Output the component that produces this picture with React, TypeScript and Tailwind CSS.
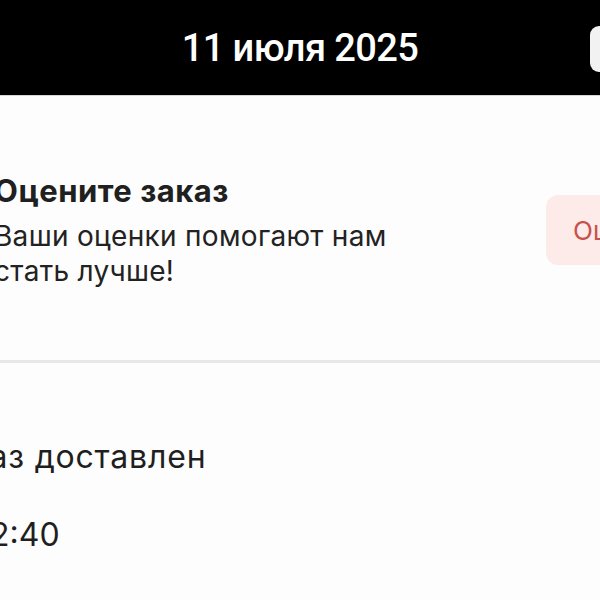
import React from "react";

export default function App() {
  return (
    <div className="w-[600px] h-[600px] overflow-hidden bg-[#fdfdfd] font-['Inter','Noto_Sans',sans-serif] text-[#1c1c1c]">
      <header className="relative h-[96px] bg-black flex items-center justify-center border-b border-[#d6d6d6]">
        <span className="font-['Roboto',sans-serif] font-medium text-[38px] leading-none text-white tracking-[-0.6px]">
          11 июля 2025
        </span>
        <div className="absolute right-[-20px] top-[26px] w-[30px] h-[46px] rounded-[9px] bg-[#f2f2f2]" />
      </header>

      <section className="flex items-start justify-between pt-[76px] pb-[71px] border-b-[3px] border-[#e8e8e8]">
        <div className="ml-[-6px] flex flex-col">
          <div className="text-[31px] leading-[38px] font-bold tracking-[0.5px] text-[#202020]">Оцените заказ</div>
          <div className="mt-[9px] text-[28px] leading-[35px] tracking-[0.3px] text-[#222]">
            Ваши оценки помогают нам
            <br />
            стать лучше!
          </div>
        </div>
        <button className="mt-[23px] mr-[-60px] w-[114px] h-[70px] rounded-[12px] bg-[#fdebe9] text-[#c8514b] text-[26px] flex items-center pl-[27px]">
          Оценить
        </button>
      </section>

      <section className="pt-[74px] flex flex-col">
        <div className="ml-[-68px] text-[32px] leading-[40px] tracking-[0.8px] text-[#1f1f1f]">Заказ доставлен</div>
        <div className="ml-[-23px] mt-[38px] text-[32px] leading-[40px] text-[#1f1f1f]">12:40</div>
      </section>
    </div>
  );
}
